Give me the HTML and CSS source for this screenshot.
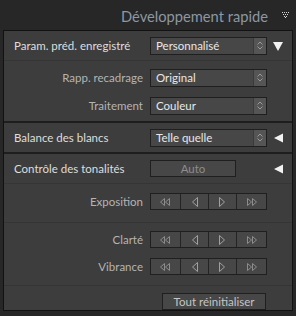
FILE: index.html
```html
<!DOCTYPE html>
<html lang="fr">
  <head>
    <meta charset="UTF-8" />
    <meta name="viewport" content="width=device-width, initial-scale=1.0" />
    <title>Développement rapide</title>
    <link rel="stylesheet" href="styles.css">
  </head>
  <body>
    <div class="header">
      <span class="title">Développement rapide</span>
      <svg class="dots" width="8" height="6" viewBox="0 0 8 6">
        <g fill="#d8d8d8">
          <rect x="0" y="0" width="1" height="1" /><rect x="2" y="0" width="1" height="1" /><rect x="4" y="0" width="1" height="1" /><rect x="6" y="0" width="1" height="1" />
          <rect x="1" y="2" width="1" height="1" /><rect x="3" y="2" width="1" height="1" /><rect x="5" y="2" width="1" height="1" />
          <rect x="2" y="4" width="1" height="1" /><rect x="4" y="4" width="1" height="1" />
          <rect x="3" y="5" width="1" height="1" />
        </g>
      </svg>
    </div>

    <div class="panel">
      <div class="section">
        <div class="row main">
          <span class="label">Param. préd. enregistré</span>
          <div class="select"><span>Personnalisé</span><i class="step"><svg width="6" height="9" viewBox="0 0 6 9"><path d="M0.5 3.5 L3 1 L5.5 3.5 M0.5 5.5 L3 8 L5.5 5.5" fill="none" stroke="#9a9a9a" /></svg></i></div>
          <svg class="tri" width="10" height="10" viewBox="0 0 10 10"><path d="M0 1 H10 L5 10 Z" fill="#f2f2f2" /></svg>
        </div>
        <div class="sub">
          <div class="row">
            <span class="label right">Rapp. recadrage</span>
            <div class="select"><span>Original</span><i class="step"><svg width="6" height="9" viewBox="0 0 6 9"><path d="M0.5 3.5 L3 1 L5.5 3.5 M0.5 5.5 L3 8 L5.5 5.5" fill="none" stroke="#9a9a9a" /></svg></i></div>
          </div>
          <div class="row">
            <span class="label right">Traitement</span>
            <div class="select"><span>Couleur</span><i class="step"><svg width="6" height="9" viewBox="0 0 6 9"><path d="M0.5 3.5 L3 1 L5.5 3.5 M0.5 5.5 L3 8 L5.5 5.5" fill="none" stroke="#9a9a9a" /></svg></i></div>
          </div>
        </div>
      </div>

      <div class="section">
        <div class="row main">
          <span class="label">Balance des blancs</span>
          <div class="select"><span>Telle quelle</span><i class="step"><svg width="6" height="9" viewBox="0 0 6 9"><path d="M0.5 3.5 L3 1 L5.5 3.5 M0.5 5.5 L3 8 L5.5 5.5" fill="none" stroke="#9a9a9a" /></svg></i></div>
          <svg class="tri" width="10" height="10" viewBox="0 0 10 10"><path d="M1 5 L10 0.5 V9.5 Z" fill="#f2f2f2" /></svg>
        </div>
      </div>

      <div class="section">
        <div class="row main">
          <span class="label">Contrôle des tonalités</span>
          <div class="ctrl"><div class="btn auto">Auto</div></div>
          <svg class="tri" width="10" height="10" viewBox="0 0 10 10"><path d="M1 5 L10 0.5 V9.5 Z" fill="#f2f2f2" /></svg>
        </div>
        <div class="sub tones">
          <div class="row">
            <span class="label right">Exposition</span>
            <div class="steps">
              <b><svg width="11" height="8" viewBox="0 0 11 8"><path d="M4.5 0.5 L0.5 4 L4.5 7.5 Z M9.5 0.5 L5.5 4 L9.5 7.5 Z" fill="none" stroke="#8c8c8c" /></svg></b>
              <b><svg width="6" height="10" viewBox="0 0 6 10"><path d="M5.5 0.5 L0.5 5 L5.5 9.5 Z" fill="none" stroke="#a0a0a0" /></svg></b>
              <b><svg width="6" height="10" viewBox="0 0 6 10"><path d="M0.5 0.5 L5.5 5 L0.5 9.5 Z" fill="none" stroke="#a0a0a0" /></svg></b>
              <b><svg width="11" height="8" viewBox="0 0 11 8"><path d="M1.5 0.5 L5.5 4 L1.5 7.5 Z M6.5 0.5 L10.5 4 L6.5 7.5 Z" fill="none" stroke="#8c8c8c" /></svg></b>
            </div>
          </div>
        </div>
        <div class="sub tones pair">
          <div class="row">
            <span class="label right">Clarté</span>
            <div class="steps">
              <b><svg width="11" height="8" viewBox="0 0 11 8"><path d="M4.5 0.5 L0.5 4 L4.5 7.5 Z M9.5 0.5 L5.5 4 L9.5 7.5 Z" fill="none" stroke="#8c8c8c" /></svg></b>
              <b><svg width="6" height="10" viewBox="0 0 6 10"><path d="M5.5 0.5 L0.5 5 L5.5 9.5 Z" fill="none" stroke="#a0a0a0" /></svg></b>
              <b><svg width="6" height="10" viewBox="0 0 6 10"><path d="M0.5 0.5 L5.5 5 L0.5 9.5 Z" fill="none" stroke="#a0a0a0" /></svg></b>
              <b><svg width="11" height="8" viewBox="0 0 11 8"><path d="M1.5 0.5 L5.5 4 L1.5 7.5 Z M6.5 0.5 L10.5 4 L6.5 7.5 Z" fill="none" stroke="#8c8c8c" /></svg></b>
            </div>
          </div>
          <div class="row">
            <span class="label right">Vibrance</span>
            <div class="steps">
              <b><svg width="11" height="8" viewBox="0 0 11 8"><path d="M4.5 0.5 L0.5 4 L4.5 7.5 Z M9.5 0.5 L5.5 4 L9.5 7.5 Z" fill="none" stroke="#8c8c8c" /></svg></b>
              <b><svg width="6" height="10" viewBox="0 0 6 10"><path d="M5.5 0.5 L0.5 5 L5.5 9.5 Z" fill="none" stroke="#a0a0a0" /></svg></b>
              <b><svg width="6" height="10" viewBox="0 0 6 10"><path d="M0.5 0.5 L5.5 5 L0.5 9.5 Z" fill="none" stroke="#a0a0a0" /></svg></b>
              <b><svg width="11" height="8" viewBox="0 0 11 8"><path d="M1.5 0.5 L5.5 4 L1.5 7.5 Z M6.5 0.5 L10.5 4 L6.5 7.5 Z" fill="none" stroke="#8c8c8c" /></svg></b>
            </div>
          </div>
        </div>
        <div class="footer">
          <div class="btn reset">Tout réinitialiser</div>
        </div>
      </div>
    </div>
  </body>
</html>
```

FILE: styles.css
```css
body {
  margin: 0;
  background: #272727;
  font-family: Lato, "Open Sans", sans-serif;
  font-size: 11.5px;
  color: #dedede;
}

.header {
  height: 30px;
  display: flex;
  align-items: center;
  justify-content: flex-end;
  padding-right: 6px;
}

.header .title {
  font-size: 14.7px;
  color: #8d97a3;
  margin-right: 14px;
  margin-top: 1px;
}

.header .dots {
  margin-top: -1px;
}

.panel {
  margin: 0 3px;
  border: 1px solid #121212;
  background: #3d3d3d;
  height: 279px;
}

.section + .section {
  border-top: 2px solid #1e1e1e;
}

.row {
  display: flex;
  align-items: center;
}

.row.main {
  height: 29px;
  padding-left: 10px;
}

.label {
  width: 136px;
  flex: none;
  white-space: nowrap;
}

.label.right {
  width: 146px;
  text-align: right;
  padding-right: 7px;
  box-sizing: border-box;
  color: #b4b4b4;
}

.sub {
  border-top: 1px solid #353535;
  padding: 7px 0 6px;
  display: flex;
  flex-direction: column;
  gap: 9px;
}

.sub .row {
  height: 19px;
}

.select,
.ctrl,
.steps {
  flex: none;
  width: 117px;
  box-sizing: border-box;
}

.select {
  height: 18px;
  border: 1px solid #1f1f1f;
  background: #474747;
  display: flex;
  align-items: center;
  color: #e8e8e8;
}

.select span {
  flex: 1;
  padding-left: 5px;
}

.select .step {
  width: 12px;
  height: 16px;
  border-left: 1px solid #3a3a3a;
  background: #555;
  display: flex;
  align-items: center;
  justify-content: center;
}

.tri {
  flex: none;
  margin-left: 6px;
}

.btn {
  box-sizing: border-box;
  border: 1px solid #1f1f1f;
  background: #474747;
  text-align: center;
}

.btn.auto {
  width: 86px;
  height: 17px;
  line-height: 15px;
  color: #8c8c8c;
}

.steps {
  display: flex;
  height: 17px;
  border: 1px solid #1f1f1f;
  background: #474747;
}

.steps b {
  flex: 1;
  display: flex;
  align-items: center;
  justify-content: center;
}

.steps b:first-child,
.steps b:last-child {
  flex: 1.1;
}

.steps b + b {
  border-left: 1px solid #242424;
}

.tones {
  padding: 8px 0 11px;
}

.pair {
  padding: 7px 0 9px;
  gap: 8px;
}

.footer {
  border-top: 1px solid #353535;
  display: flex;
  justify-content: flex-end;
  padding: 7px 26px 0 0;
}

.btn.reset {
  width: 104px;
  height: 17px;
  line-height: 15px;
  color: #c4c4c4;
}
```
